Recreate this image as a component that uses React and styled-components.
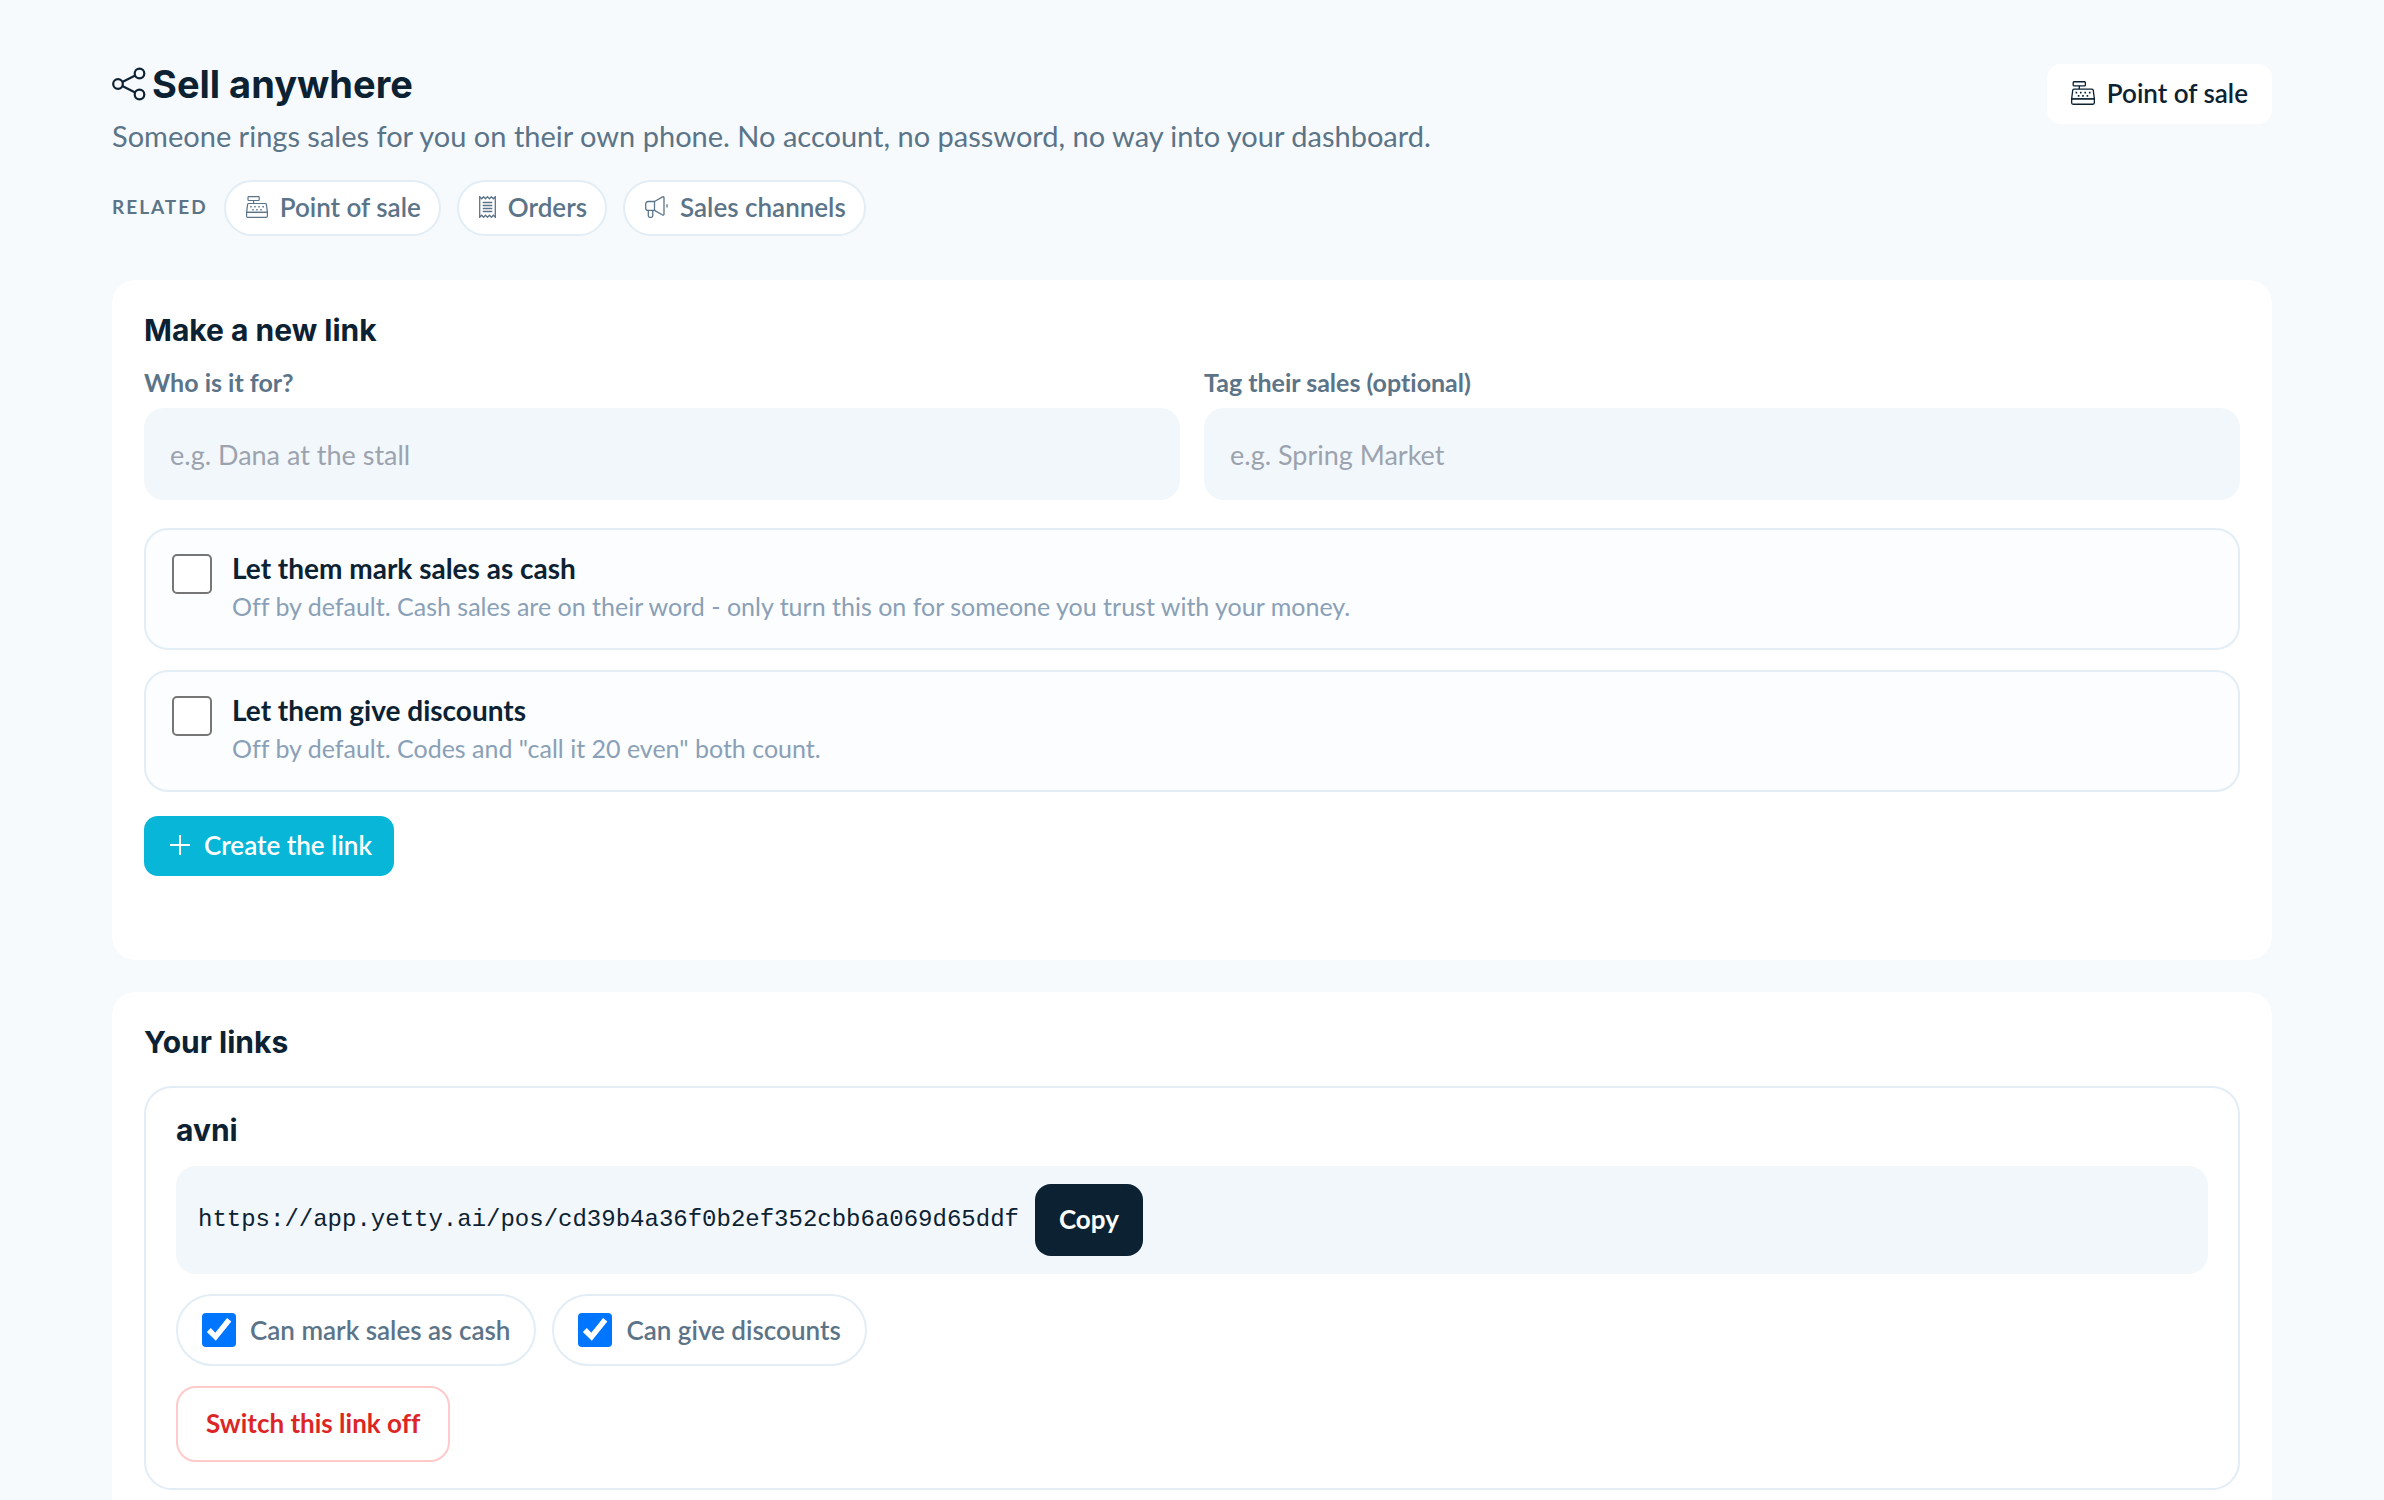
import * as React from "react"
import styled, { createGlobalStyle, css } from "styled-components"

const colors = {
  page: "#f6fafd",
  ink: "#0c2233",
  muted: "#5b7488",
  faint: "#8aa0b6",
  line: "#e2edf5",
  field: "#f2f7fb",
  accent: "#08b6d8",
  danger: "#dc2626",
}

const ShareIcon = () => (
  <svg width="34" height="34" viewBox="0 0 34 34" fill="none" stroke="currentColor" strokeWidth="2.200" aria-hidden="true">
    <circle cx="6" cy="17" r="4.800" />
    <circle cx="27.500" cy="6.500" r="4.800" />
    <circle cx="27.500" cy="27.500" r="4.800" />
    <path d="M10.300 14.900 23.200 8.600M10.300 19.100l12.900 6.300" />
  </svg>
)

const RegisterIcon = ({ size = 22 }) => (
  <svg width={size} height={size} viewBox="0 0 22 22" fill="none" stroke="currentColor" strokeWidth="1.200" aria-hidden="true">
    <rect x="2" y="0.700" width="11.200" height="3.800" rx="0.800" />
    <path d="M7.600 4.500v3M2.700 7.500h16.600c.6 0 1 .3 1.100.9l1 7.900H.6l1-7.900c.1-.6.5-.9 1.100-.9z" />
    <path d="M.6 16.300h20.800v3.700c0 .8-.5 1.300-1.300 1.300H1.900c-.8 0-1.300-.5-1.300-1.300z" />
    <path
      strokeWidth="1.600"
      d="M4.200 10.700h1.500M8.200 10.700h1.500M12.300 10.700h1.500M16.400 10.700h1.500M6.200 13.700h1.500M10.200 13.700h1.500M14.300 13.700h1.500"
    />
  </svg>
)

const ReceiptIcon = () => (
  <svg width="17" height="22" viewBox="0 0 17 22" fill="none" stroke="currentColor" strokeWidth="1.300" aria-hidden="true">
    <path d="M.7.700v20.600l2-2 1.900 2 1.900-2 2 2 2-2 1.900 2 1.900-2 2 2V.7l-2 2-1.900-2-1.900 2-2-2-2 2-1.900-2-1.900 2z" />
    <path d="M3.700 6.500h9.600M3.700 9.500h9.600M3.700 12.500h9.600M3.700 15.500h9.600" />
  </svg>
)

const MegaphoneIcon = () => (
  <svg width="23" height="22" viewBox="0 0 23 22" fill="none" stroke="currentColor" strokeWidth="1.300" strokeLinejoin="round" aria-hidden="true">
    <path d="M9.500 5.500H3.200C1.700 5.500.7 6.500.7 8v3.900c0 1.500 1 2.500 2.500 2.500h6.300z" />
    <path d="M9.500 5.500 17.600.9c.8-.4 1.400 0 1.400.8v16.500c0 .8-.6 1.200-1.400.8l-8.100-4.600" />
    <path d="M3.300 14.400v5.400c0 .9.600 1.500 1.500 1.500h1.500c.9 0 1.500-.6 1.500-1.500v-5.400" />
    <path d="M22 8.200v3.400" />
  </svg>
)

const PlusIcon = () => (
  <svg width="20" height="20" viewBox="0 0 20 20" stroke="currentColor" strokeWidth="2" aria-hidden="true">
    <path d="M10 0v20M0 10h20" />
  </svg>
)

const App = () => {
  const [grants, setGrants] = React.useState({ cash: true, discounts: true })

  const toggleGrant = name =>
    setGrants(prevState => ({ ...prevState, [name]: !prevState[name] }))

  return (
    <>
      <GlobalStyle />
      <Page>
        <Header>
          <div>
            <Title>
              <ShareIcon />
              Sell anywhere
            </Title>
            <Subtitle>
              Someone rings sales for you on their own phone. No account, no
              password, no way into your dashboard.
            </Subtitle>
          </div>
          <HeaderLink href="#pos">
            <RegisterIcon size={24} />
            Point of sale
          </HeaderLink>
        </Header>

        <Related aria-label="Related">
          <RelatedLabel>Related</RelatedLabel>
          <RelatedLink href="#pos">
            <RegisterIcon />
            Point of sale
          </RelatedLink>
          <RelatedLink href="#orders">
            <ReceiptIcon />
            Orders
          </RelatedLink>
          <RelatedLink href="#channels">
            <MegaphoneIcon />
            Sales channels
          </RelatedLink>
        </Related>

        <Card>
          <CardTitle>Make a new link</CardTitle>
          <form onSubmit={e => e.preventDefault()}>
            <Fields>
              <Field>
                <label htmlFor="who">Who is it for?</label>
                <input id="who" type="text" placeholder="e.g. Dana at the stall" />
              </Field>
              <Field>
                <label htmlFor="tag">Tag their sales (optional)</label>
                <input id="tag" type="text" placeholder="e.g. Spring Market" />
              </Field>
            </Fields>
            <Options>
              <Option>
                <Checkbox $size={20} />
                <span>
                  <strong>Let them mark sales as cash</strong>
                  <small>
                    Off by default. Cash sales are on their word - only turn
                    this on for someone you trust with your money.
                  </small>
                </span>
              </Option>
              <Option>
                <Checkbox $size={20} />
                <span>
                  <strong>Let them give discounts</strong>
                  <small>
                    Off by default. Codes and "call it 20 even" both count.
                  </small>
                </span>
              </Option>
            </Options>
            <CreateButton type="submit">
              <PlusIcon />
              Create the link
            </CreateButton>
            <Status role="status" />
          </form>
        </Card>

        <Card>
          <CardTitle>Your links</CardTitle>
          <LinkItem>
            <LinkName>avni</LinkName>
            <LinkUrl>
              <code>https://app.yetty.ai/pos/cd39b4a36f0b2ef352cbb6a069d65ddf</code>
              <CopyButton type="button">Copy</CopyButton>
            </LinkUrl>
            <Grants>
              <Grant>
                <Checkbox
                  $size={17}
                  checked={grants.cash}
                  onChange={() => toggleGrant("cash")}
                />
                Can mark sales as cash
              </Grant>
              <Grant>
                <Checkbox
                  $size={17}
                  checked={grants.discounts}
                  onChange={() => toggleGrant("discounts")}
                />
                Can give discounts
              </Grant>
            </Grants>
            <OffButton type="button">Switch this link off</OffButton>
          </LinkItem>
        </Card>
      </Page>
    </>
  )
}

const GlobalStyle = createGlobalStyle`
  * {
    box-sizing: border-box;
  }

  html {
    scrollbar-width: none;
  }

  body {
    margin: 0;
    background: ${colors.page};
    color: ${colors.ink};
    font-family: Lato, "Open Sans", sans-serif;
    font-size: 26px;
    font-variant-ligatures: none;
    line-height: 32px;
  }

  button,
  input {
    font: inherit;
    font-variant-ligatures: none;
  }

  a {
    color: inherit;
    text-decoration: none;
  }

  svg {
    flex: none;
  }
`

const heading = css`
  margin: 0;
  font-family: Inter, sans-serif;
  font-weight: 700;
`

const Page = styled.main`
  padding: 64px 112px;
`

const Header = styled.header`
  display: flex;
  justify-content: space-between;
  align-items: flex-start;
  gap: 24px;
`

const Title = styled.h1`
  ${heading}
  display: flex;
  align-items: center;
  gap: 6px;
  font-size: 38px;
  line-height: 40px;
`

const Subtitle = styled.p`
  margin: 12px 0 0;
  color: ${colors.muted};
  font-size: 29px;
  line-height: 40px;
`

const HeaderLink = styled.a`
  display: flex;
  align-items: center;
  gap: 12px;
  height: 60px;
  padding: 0 24px 2px;
  border-radius: 14px;
  background: #fff;
  font-weight: 600;
  white-space: nowrap;
`

const Related = styled.nav`
  display: flex;
  flex-wrap: wrap;
  align-items: center;
  gap: 16px;
  margin: 24px 0 44px;
  color: ${colors.muted};
`

const RelatedLabel = styled.span`
  padding-bottom: 2px;
  font-size: 19px;
  font-weight: 700;
  letter-spacing: 2px;
  text-transform: uppercase;
`

const RelatedLink = styled.a`
  display: flex;
  align-items: center;
  gap: 12px;
  height: 56px;
  padding: 0 18px 2px 20px;
  border: 2px solid ${colors.line};
  border-radius: 28px;
  background: #fff;
  font-weight: 600;
`

const Card = styled.section`
  padding: 32px;
  border-radius: 24px;
  background: #fff;

  & + & {
    margin-top: 32px;
  }
`

const CardTitle = styled.h2`
  ${heading}
  font-size: 30px;
  line-height: 36px;
`

const Fields = styled.div`
  display: grid;
  grid-template-columns: 1fr 1fr;
  gap: 24px;
  margin-top: 18px;
`

const Field = styled.div`
  display: flex;
  flex-direction: column;
  gap: 10px;

  label {
    color: ${colors.muted};
    font-size: 25px;
    font-weight: 700;
  }

  input {
    height: 92px;
    padding: 0 26px;
    border: 0;
    border-radius: 20px;
    background: ${colors.field};
    color: ${colors.ink};
    font-size: 27px;
  }

  input::placeholder {
    color: #9ca3af;
  }
`

const Options = styled.div`
  display: grid;
  gap: 20px;
  margin: 28px 0 24px;
`

/* zoom doubles the native box, so its outline and tick get thicker with it */
const Checkbox = styled.input.attrs({ type: "checkbox" })`
  flex: none;
  width: ${props => props.$size}px;
  height: ${props => props.$size}px;
  margin: 0;
  zoom: 2;
`

const Option = styled.label`
  display: flex;
  align-items: flex-start;
  gap: 20px;
  padding: 20px 26px 24px;
  border: 2px solid ${colors.line};
  border-radius: 24px;
  background: #fbfdff;

  input {
    margin-top: 2px;
  }

  strong,
  small {
    display: block;
    line-height: 36px;
  }

  strong {
    font-size: 28px;
    font-weight: 700;
  }

  small {
    margin-top: 2px;
    color: ${colors.faint};
    font-size: 25px;
  }
`

const CreateButton = styled.button`
  display: flex;
  align-items: center;
  gap: 14px;
  height: 60px;
  padding: 0 22px 2px 26px;
  border: 0;
  border-radius: 14px;
  background: ${colors.accent};
  color: #fff;
  font-weight: 600;
`

const Status = styled.div`
  min-height: 28px;
  margin-top: 24px;
`

const LinkItem = styled.article`
  margin-top: 26px;
  padding: 26px 30px;
  border: 2px solid ${colors.line};
  border-radius: 28px;
`

const LinkName = styled.h3`
  ${heading}
  font-size: 30px;
  line-height: 32px;
`

const LinkUrl = styled.div`
  display: flex;
  align-items: center;
  gap: 16px;
  margin-top: 20px;
  padding: 18px 22px;
  border-radius: 20px;
  background: ${colors.field};

  code {
    font-family: "Courier New", "Liberation Mono", monospace;
    font-size: 24px;
  }
`

const CopyButton = styled.button`
  height: 72px;
  padding: 0 24px 2px;
  border: 0;
  border-radius: 16px;
  background: ${colors.ink};
  color: #fff;
  font-weight: 700;
`

const Grants = styled.div`
  display: flex;
  flex-wrap: wrap;
  gap: 16px;
  margin: 20px 0;
`

const Grant = styled.label`
  display: flex;
  align-items: center;
  gap: 14px;
  height: 72px;
  padding: 0 24px;
  border: 2px solid ${colors.line};
  border-radius: 36px;
  color: ${colors.muted};
  font-weight: 600;
`

const OffButton = styled.button`
  height: 76px;
  padding: 0 28px 2px;
  border: 2px solid #fecaca;
  border-radius: 20px;
  background: #fff;
  color: ${colors.danger};
  font-weight: 700;
`

export default App
